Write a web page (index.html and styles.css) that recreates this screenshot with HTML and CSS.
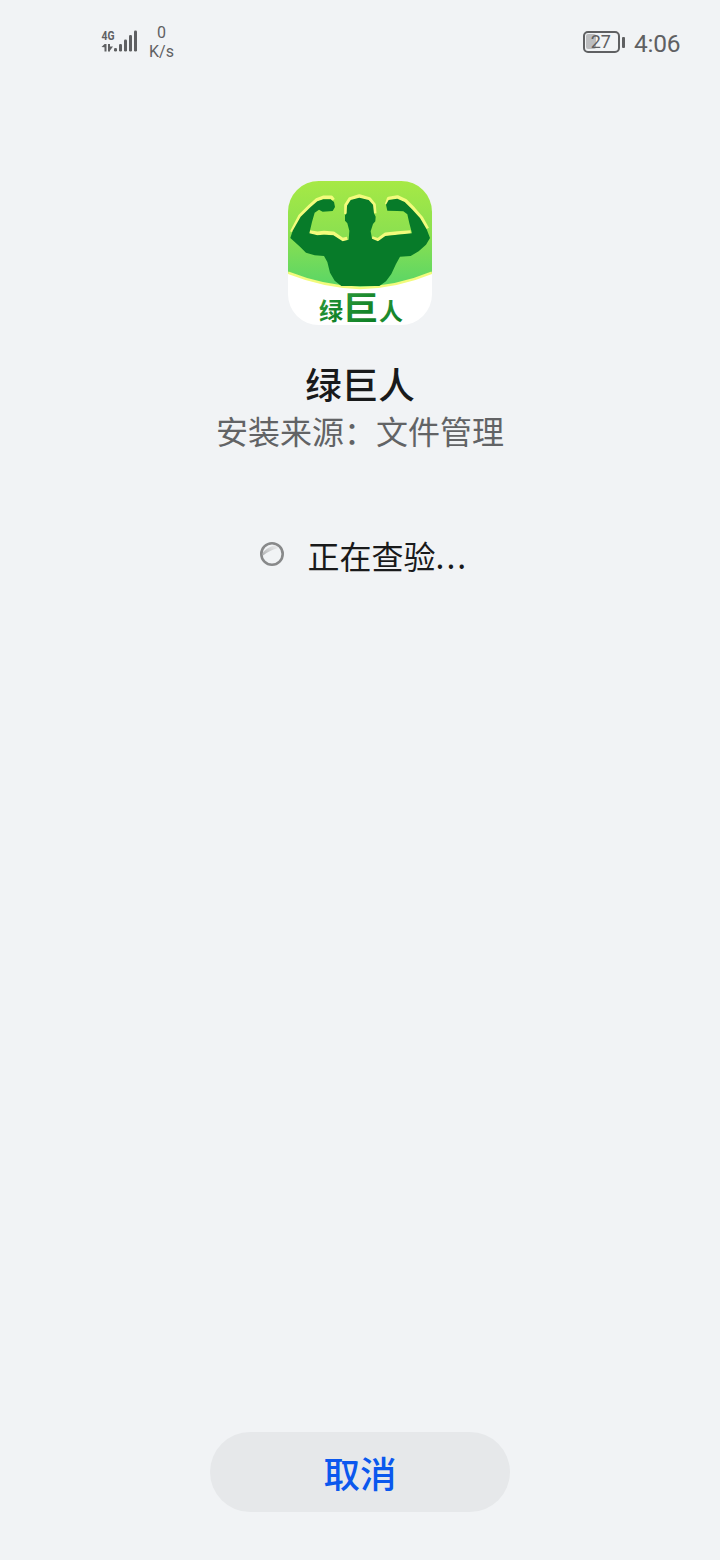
FILE: index.html
```html
<!DOCTYPE html>
<html lang="zh-CN">
<head>
<meta charset="UTF-8">
<title>绿巨人</title>
<link rel="stylesheet" href="styles.css">
</head>
<body>
<div class="screen">
  <header class="status">
    <div class="status-left">
      <svg class="signal" width="38" height="26" viewBox="0 0 38 26">
        <text class="net" x="0.500" y="13" textLength="13" lengthAdjust="spacingAndGlyphs">4G</text>
        <path d="M0.500 20L3.600 17H5.500V24.500H3.500V20.300ZM7 17H9V19.500H12L9 23.500V24.500H7Z" fill="#5f6062"/>
        <g fill="#5f6062">
          <rect x="13" y="21" width="3" height="3.500" rx="1.300"/>
          <rect x="18" y="17" width="3" height="7.500" rx="1.300"/>
          <rect x="23" y="12.500" width="3" height="12" rx="1.300"/>
          <rect x="28" y="8" width="3" height="16.500" rx="1.300"/>
          <rect x="33" y="3.500" width="3" height="21" rx="1.300"/>
        </g>
      </svg>
      <div class="speed"><span>0</span><span>K/s</span></div>
    </div>
    <div class="status-right">
      <svg class="battery" width="44" height="24" viewBox="0 0 44 24">
        <rect x="4" y="4" width="10" height="15" rx="2" fill="#bcbdbf"/>
        <rect x="2" y="2" width="35" height="20" rx="4" fill="none" stroke="#5f6062" stroke-width="2"/>
        <rect x="40" y="7" width="3" height="11" rx="1" fill="#5f6062"/>
        <text class="charge" x="18.800" y="18.300" text-anchor="middle">27</text>
      </svg>
      <span class="clock">4:06</span>
    </div>
  </header>

  <main class="content">
    <svg class="app-icon" viewBox="24 27 432 432">
      <defs>
        <linearGradient id="sky" x1="0" y1="0" x2="0" y2="1">
          <stop offset="0" stop-color="#a6e945"/>
          <stop offset="0.500" stop-color="#8be050"/>
          <stop offset="1" stop-color="#58d567"/>
        </linearGradient>
        <linearGradient id="ink" x1="0" y1="0" x2="1" y2="1">
          <stop offset="0" stop-color="#2f9c3e"/>
          <stop offset="1" stop-color="#087a20"/>
        </linearGradient>
        <clipPath id="tile"><rect x="24" y="27" width="432" height="432" rx="92"/></clipPath>
        <path id="hero" d="M31 198L38 176L62 134L92 105L112 88L130 82L152 82L162 90L165 105L158 117L128 119L117 113L104 122L96 150L88 184L112 190L132 188L160 190L188 208L206 203L208 176L202 154L195 146L195 130L200 124L201 101L212 84L238 77L266 84L279 98L282 124L287 134L286 148L279 156L272 178L276 200L294 208L316 192L352 188L396 184L388 154L382 127L370 118L352 117L322 116L318 98L326 84L352 80L374 90L396 112L420 138L440 172L450 198L438 218L416 238L392 252L360 254L348 276L334 306L318 328L298 342H184L164 326L150 302L142 270L132 252L104 250L78 242L60 224Z"/>
      </defs>
      <g clip-path="url(#tile)">
        <rect x="24" y="27" width="432" height="432" fill="#fff"/>
        <path d="M24 27H456V302Q350 346 240 348Q130 344 24 302Z" fill="url(#sky)"/>
        <g fill="none" stroke="#f2fb7c" stroke-width="11" stroke-linejoin="round">
          <path d="M35 180L60 132L90 102L110 84L130 76L154 76L160 84M88 180L112 184L132 182L160 184L188 203L202 200M198 126L198 100L210 81L238 72L268 81L282 98L284 124M276 198L294 204L316 187L352 183L392 180M320 98L326 80L352 75L376 86L400 110L424 138L442 170"/>
          <path d="M24 302Q130 344 240 348Q350 346 456 302" stroke-width="8"/>
        </g>
        <use href="#hero" fill="#077b29"/>
      </g>
      <g class="logo-text" fill="url(#ink)">
        <text x="117" y="445" font-size="72">绿</text>
        <text x="189" y="444" font-size="98" textLength="106" lengthAdjust="spacingAndGlyphs">巨</text>
        <text x="297" y="445" font-size="72">人</text>
      </g>
    </svg>
    <h1 class="app-name">绿巨人</h1>
    <p class="source">安装来源：文件管理</p>
    <div class="progress">
      <svg class="spinner" width="26" height="26" viewBox="0 0 26 26">
        <defs><linearGradient id="shine" x1="0" y1="1" x2="1" y2="0">
          <stop offset="0" stop-color="#b0b1b2"/><stop offset="1" stop-color="#eff0f1"/>
        </linearGradient></defs>
        <path d="M3.500 12Q8 6 17 4L19 7Q11 9 4 14.500Z" fill="url(#shine)"/>
        <circle cx="13" cy="13" r="10.700" fill="none" stroke="#88898a" stroke-width="2.600"/>
      </svg>
      <span class="checking">正在查验<span class="dots">...</span></span>
    </div>
  </main>

  <footer class="footer"><button class="cancel">取消</button></footer>
</div>
</body>
</html>
```
FILE: styles.css
```css
* { box-sizing: border-box; }
body { margin: 0; background: #f1f3f5; font-family: "Noto Sans CJK SC", sans-serif; }
.screen { width: 720px; height: 1560px; display: flex; flex-direction: column; }
.status { height: 84px; padding: 0 39px 0 101px; display: flex; justify-content: space-between; color: #5f6062; font-family: Roboto, sans-serif; }
.status-left { display: flex; gap: 9px; padding-top: 23px; }
.signal { margin-top: 4px; }
.net { font: bold 13.500px Roboto, sans-serif; fill: #5f6062; }
.speed { display: flex; flex-direction: column; align-items: center; width: 27px; font-size: 16px; line-height: 19px; }
.status-right { display: flex; gap: 8px; padding-top: 30px; }
.charge { font: 18px Roboto, sans-serif; fill: #5f6062; }
.clock { font: 24.500px/28px Roboto, sans-serif; width: 47px; white-space: nowrap; letter-spacing: -0.200px; }
.content { flex: 1; display: flex; flex-direction: column; align-items: center; padding-top: 97px; }
.app-icon { width: 144px; height: 144px; overflow: visible; flex: none; }
.logo-text { font-family: "Noto Sans CJK SC", sans-serif; font-weight: 700; }
.app-name { margin: 33px 0 0; font-size: 36.500px; line-height: 52px; font-weight: 500; color: #191a1b; }
.source { margin: 0; font-size: 32px; line-height: 40px; color: #626365; }
.progress { display: flex; align-items: center; width: 209px; margin: 83px 0 0 6px; gap: 23px; color: #191a1b; }
.spinner { flex: none; margin-bottom: 2px; }
.checking { font-size: 32px; line-height: 44px; white-space: nowrap; }
.dots { letter-spacing: 2px; }
.footer { display: flex; justify-content: center; padding-bottom: 48px; }
.cancel { width: 300px; height: 80px; padding: 1px 0 0; border: 0; border-radius: 40px; background: #e6e8ea; color: #0b58ee; font: 500 36.500px "Noto Sans CJK SC", sans-serif; }
```
